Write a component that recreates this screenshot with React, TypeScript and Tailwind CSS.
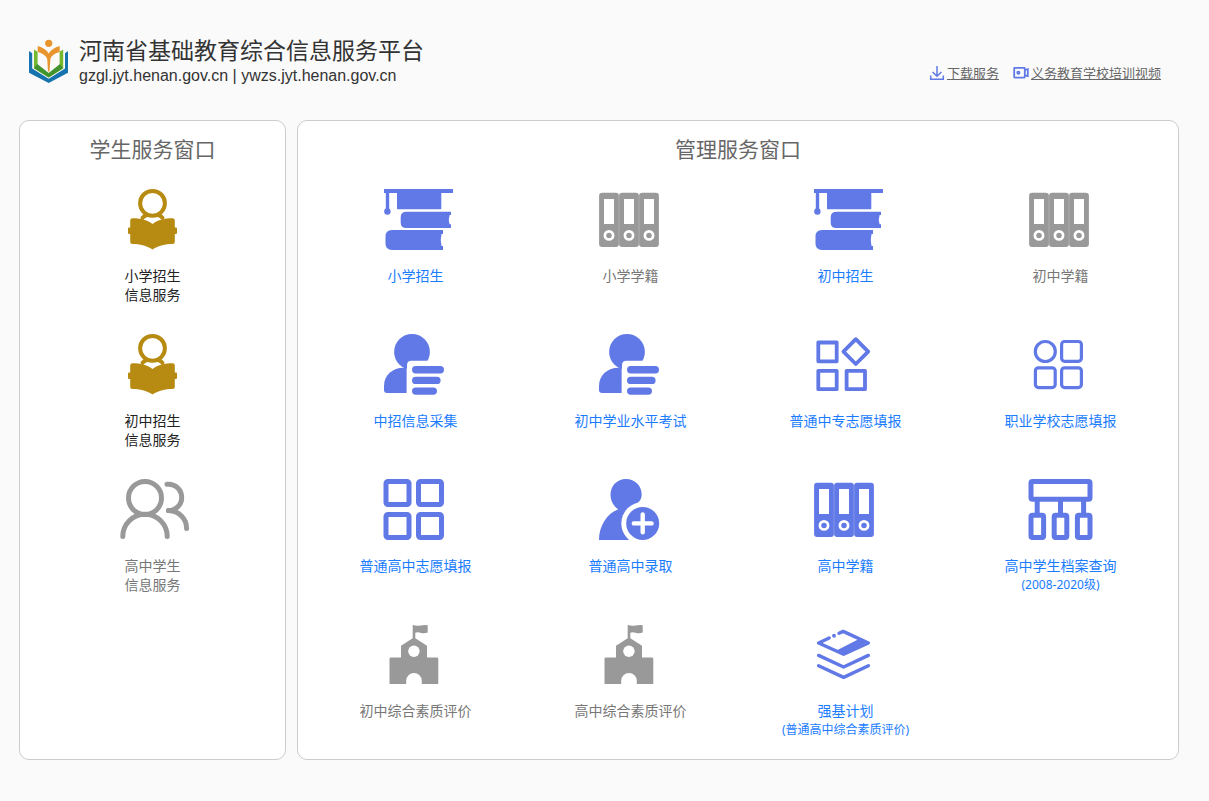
import type { ReactNode } from 'react';
import clsx from 'clsx';

type Tone = 'blue' | 'gray' | 'gold';

interface ServiceItem {
  label: string;
  secondLine?: string;
  note?: string;
  icon: () => ReactNode;
  tone: Tone;
}

const iconTone: Record<Tone, string> = {
  blue: 'text-[#6179e6]',
  gray: 'text-[#999999]',
  gold: 'text-[#b78b12]',
};

const labelTone: Record<Tone, string> = {
  blue: 'text-[#1a7cff]',
  gray: 'text-[#777777]',
  gold: 'text-[#222222]',
};

function Icon({ children }: { children: ReactNode }) {
  return (
    <svg viewBox="0 0 81 64" className="h-16 w-[81px]" fill="currentColor" aria-hidden="true">
      {children}
    </svg>
  );
}

function ReaderIcon() {
  return (
    <Icon>
      <circle cx="40.5" cy="15.3" r="12.4" fill="none" stroke="currentColor" strokeWidth="4" />
      <path d="M30.5 29.8 Q32 27.5 35.5 27 M50.5 29.8 Q49 27.5 45.5 27" fill="none" stroke="currentColor" strokeWidth="4" strokeLinecap="round" />
      <path d="M20.5 30.2 C28 30.2 35 31.8 40.5 36 C46 31.8 53 30.2 60.5 30.2 Q62.8 30.2 62.8 32.5 V39.6 H64 Q65 39.6 65 40.6 V45 Q65 46 64 46 H62.8 V54 Q62.8 56 60.5 56 C53 56 47 57.5 40.5 61.5 C34 57.5 28 56 20.5 56 Q18.2 56 18.2 54 V46 H17 Q16 46 16 45 V40.6 Q16 39.6 17 39.6 H18.2 V32.5 Q18.2 30.2 20.5 30.2 Z" />
    </Icon>
  );
}

function StudentsIcon() {
  return (
    <Icon>
      <g fill="none" stroke="currentColor" strokeWidth="5" strokeLinecap="round">
        <circle cx="33" cy="20" r="16.5" />
        <path d="M10.8 58.5 A22.2 22.2 0 0 1 55.2 58.5" />
        <path d="M55 6.2 H56.5 A13.2 13.2 0 0 1 56.5 32.6" />
        <path d="M56.5 32.6 C67 33 74.6 40.5 74.6 50.5" />
      </g>
    </Icon>
  );
}

function BooksIcon() {
  return (
    <Icon>
      <path d="M9 1 H78 V5 H66.3 V20.5 Q66.3 21.3 65.5 21.3 H22.8 Q22 21.3 22 20.5 V5 H14.2 V21 H10.8 V5 H9 Z" />
      <circle cx="12.4" cy="23.5" r="3.2" />
      <path d="M31.5 23.7 H76 V27 H74.6 Q73 31.5 74.6 36.3 H76 V40 H31.5 Q25.7 40 25.7 34.5 V29.2 Q25.7 23.7 31.5 23.7 Z" />
      <path d="M17 42 H68 V46 H66.5 Q65 52 66.5 58 H68 V62 H17 Q10.5 62 10.5 55.5 V48.5 Q10.5 42 17 42 Z" />
    </Icon>
  );
}

function BindersIcon() {
  return (
    <Icon>
      {[9, 29, 49].map((x) => (
        <g key={x}>
          <rect x={x + 0.1} y="4.7" width="19.8" height="54.3" rx="3" />
          <rect x={x + 5} y="11" width="10" height="25" fill="white" />
          <circle cx={x + 10} cy="47.4" r="4.1" fill="none" stroke="white" strokeWidth="2.7" />
        </g>
      ))}
    </Icon>
  );
}

function UserListIcon() {
  return (
    <Icon>
      <circle cx="37" cy="18.9" r="17.9" />
      <path d="M28.7 34.7 Q30.2 34.7 31.6 36 V60 H12 Q9 60 9 57 V53 C9 42 17.5 34.7 28.7 34.7 Z" />
      <path d="M32 62 V32 Q32 27.7 36.5 27.7 H72 V62 Z" fill="white" />
      <rect x="37" y="33" width="32" height="7.4" rx="3.7" />
      <rect x="37" y="43.7" width="28.6" height="7.4" rx="3.7" />
      <rect x="37" y="54.4" width="25" height="7.4" rx="3.7" />
    </Icon>
  );
}

function DiamondGridIcon() {
  return (
    <Icon>
      <g fill="none" stroke="currentColor" strokeWidth="3.8" strokeLinejoin="round">
        <rect x="13.3" y="9.5" width="18.4" height="18.8" />
        <rect x="13.3" y="37.8" width="18.4" height="18.4" />
        <rect x="41.6" y="37.8" width="18.4" height="18.4" />
        <path d="M50.8 6.2 L63.2 18.6 L50.8 31 L38.4 18.6 Z" />
      </g>
    </Icon>
  );
}

function RoundGridIcon() {
  return (
    <Icon>
      <g fill="none" stroke="currentColor" strokeWidth="3.2">
        <circle cx="25.3" cy="18.5" r="10" />
        <rect x="41.6" y="8.5" width="19.8" height="19.8" rx="3" />
        <rect x="15.4" y="34.8" width="19.8" height="19.8" rx="3" />
        <rect x="41.6" y="34.8" width="19.8" height="19.8" rx="3" />
      </g>
    </Icon>
  );
}

function SquareGridIcon() {
  return (
    <Icon>
      <g fill="none" stroke="currentColor" strokeWidth="5">
        <rect x="11" y="3.5" width="23" height="23" rx="2" />
        <rect x="43.5" y="3.5" width="23" height="23" rx="2" />
        <rect x="11" y="36.5" width="23" height="23" rx="2" />
        <rect x="43.5" y="36.5" width="23" height="23" rx="2" />
      </g>
    </Icon>
  );
}

function UserAddIcon() {
  return (
    <Icon>
      <path d="M36 1 C45 1 51.7 8 51.7 16.5 C51.7 24 46 26 40 30 L42 62 H9 C9 48 17 35.5 28.3 31.3 C23 28 20.5 22 20.5 16.5 C20.5 8 27 1 36 1 Z" />
      <circle cx="52.7" cy="45.4" r="21.4" fill="white" />
      <circle cx="52.7" cy="45.4" r="16.5" />
      <path d="M43.8 45.4 H61.6 M52.7 36.5 V54.3" stroke="white" strokeWidth="4.4" strokeLinecap="round" />
    </Icon>
  );
}

function ArchiveTreeIcon() {
  return (
    <Icon>
      <g fill="none" stroke="currentColor" strokeWidth="5">
        <rect x="11" y="3.5" width="59" height="17.7" rx="1.5" />
        <path d="M17.2 22 V36 M40.5 22 V36 M63.6 22 V36" />
        <rect x="11" y="37.2" width="12.6" height="22.2" rx="1.5" />
        <rect x="34.2" y="37.2" width="12.6" height="22.2" rx="1.5" />
        <rect x="57.4" y="37.2" width="12.6" height="22.2" rx="1.5" />
      </g>
    </Icon>
  );
}

function SchoolIcon() {
  return (
    <Icon>
      <path d="M37.7 2 Q42 3.2 45.5 2.5 Q49.5 1.6 52.7 2.2 V9.6 Q49 10.8 45.5 9.7 Q42.5 8.9 40.3 9.7 V15.2 L52 22.7 V34.4 H62 Q63.3 34.4 63.3 35.7 V61 H46.8 V57.8 A7.8 7.8 0 0 0 31.2 57.8 V61 H14.5 V35.7 Q14.5 34.4 15.8 34.4 H26 V22.7 L37.7 15.2 Z" />
      <circle cx="38.9" cy="28.3" r="5.7" fill="white" />
    </Icon>
  );
}

function LayersIcon() {
  return (
    <Icon>
      <g fill="none" stroke="currentColor" strokeWidth="3.4" strokeLinecap="round" strokeLinejoin="round">
        <path d="M24.2 15 L13.6 20 L38.6 31.2 L63.4 20 L38.2 8.4 L34 10.3" />
        <path d="M29 12.7 V12.8" strokeWidth="3.8" />
        <path d="M13.6 32.4 L38.6 44 L63.4 32.4" />
        <path d="M13.6 42.8 L38.6 54.4 L63.4 42.8" />
      </g>
      <path d="M53 16.6 L63.4 20 L38.6 31.5 L32 27.3 Z" />
    </Icon>
  );
}

function Logo() {
  return (
    <svg viewBox="0 0 42 46" className="h-[46px] w-[42px] shrink-0" role="img" aria-label="logo">
      <path d="M1 13 L4.2 15.2 V30.5 L20.7 40.8 L37 30.5 V15.2 L40 13 V34.7 L20.7 45 L1 34.7 Z" fill="#1673ae" />
      <path d="M6 11.6 L9.6 13.8 V27 L20.7 35.6 L31.6 27 V13.8 L35.2 11.6 V30.3 L20.7 39.6 L6 30.3 Z" fill="#76b82e" />
      <path d="M9.2 26 L20.7 35 L32 26 L35.2 30.3 L20.7 39.6 L6 30.3 Z" fill="#43942f" />
      <path d="M9.7 8 Q17.5 10 20.7 15.5 Q24 10 31.7 8 V14 Q24.8 15.5 22.4 20.7 L21.5 33.5 H20 L19.2 20.7 Q16.5 15.5 9.7 14 Z" fill="#e9952d" />
      <circle cx="20.7" cy="5.3" r="3.6" fill="#e9952d" />
    </svg>
  );
}

function DownloadIcon() {
  return (
    <svg viewBox="0 0 16 16" className="size-4" fill="none" stroke="#6179e6" strokeWidth="1.5" aria-hidden="true">
      <path d="M8 1 V11 M3.6 7 L8 11.3 L12.4 7 M1.7 10.6 V14.2 H14.3 V10.6" />
    </svg>
  );
}

function VideoIcon() {
  return (
    <svg viewBox="0 0 16 16" className="size-4" fill="none" stroke="#6179e6" strokeWidth="1.8" aria-hidden="true">
      <rect x="1.2" y="2.8" width="10.6" height="9.8" rx="0.5" />
      <path d="M11.8 5 L14.8 4.2 V11.2 L11.8 10.4" />
      <circle cx="5.4" cy="7.7" r="1.1" />
    </svg>
  );
}

const studentServices: ServiceItem[] = [
  { label: '小学招生', secondLine: '信息服务', icon: ReaderIcon, tone: 'gold' },
  { label: '初中招生', secondLine: '信息服务', icon: ReaderIcon, tone: 'gold' },
  { label: '高中学生', secondLine: '信息服务', icon: StudentsIcon, tone: 'gray' },
];

const manageServices: ServiceItem[] = [
  { label: '小学招生', icon: BooksIcon, tone: 'blue' },
  { label: '小学学籍', icon: BindersIcon, tone: 'gray' },
  { label: '初中招生', icon: BooksIcon, tone: 'blue' },
  { label: '初中学籍', icon: BindersIcon, tone: 'gray' },
  { label: '中招信息采集', icon: UserListIcon, tone: 'blue' },
  { label: '初中学业水平考试', icon: UserListIcon, tone: 'blue' },
  { label: '普通中专志愿填报', icon: DiamondGridIcon, tone: 'blue' },
  { label: '职业学校志愿填报', icon: RoundGridIcon, tone: 'blue' },
  { label: '普通高中志愿填报', icon: SquareGridIcon, tone: 'blue' },
  { label: '普通高中录取', icon: UserAddIcon, tone: 'blue' },
  { label: '高中学籍', icon: BindersIcon, tone: 'blue' },
  { label: '高中学生档案查询', note: '(2008-2020级)', icon: ArchiveTreeIcon, tone: 'blue' },
  { label: '初中综合素质评价', icon: SchoolIcon, tone: 'gray' },
  { label: '高中综合素质评价', icon: SchoolIcon, tone: 'gray' },
  { label: '强基计划', note: '(普通高中综合素质评价)', icon: LayersIcon, tone: 'blue' },
];

function ServiceLink({ item }: { item: ServiceItem }) {
  const ItemIcon = item.icon;
  return (
    <a href="#" className="flex min-h-[145px] flex-col items-center pt-[9px] text-center">
      <span className={iconTone[item.tone]}>
        <ItemIcon />
      </span>
      <span className={clsx('mt-[14px] text-sm leading-[19px]', labelTone[item.tone])}>
        {item.label}
        {item.secondLine ? <span className="block">{item.secondLine}</span> : null}
        {item.note ? <span className="block text-xs leading-[19px]">{item.note}</span> : null}
      </span>
    </a>
  );
}

function Panel({ title, className, children }: { title: string; className: string; children: ReactNode }) {
  return (
    <section className={clsx('rounded-[10px] border border-[#cccccc] bg-white px-[10px]', className)}>
      <h2 className="mt-3 mb-[14px] text-center text-[21px] leading-8 text-[#666666]">{title}</h2>
      {children}
    </section>
  );
}

export default function App() {
  return (
    <div className="min-h-screen bg-[#fafafa] pb-10 font-['Noto_Sans','Noto_Sans_CJK_SC',sans-serif]">
      <header className="flex items-start justify-between pt-[38px] pr-12 pb-[30px] pl-7">
        <div className="flex gap-[9px]">
          <Logo />
          <div className="text-[#333333]">
            <h1 className="text-[23px] leading-6">河南省基础教育综合信息服务平台</h1>
            <p className="font-['Liberation_Sans',sans-serif] text-base leading-7">
              gzgl.jyt.henan.gov.cn | ywzs.jyt.henan.gov.cn
            </p>
          </div>
        </div>
        <nav className="mt-[25px] flex gap-[14px] text-[13px] leading-5 text-[#666666]">
          <a href="#" className="flex items-center gap-0.5">
            <DownloadIcon />
            <span className="underline">下载服务</span>
          </a>
          <a href="#" className="flex items-center gap-0.5">
            <VideoIcon />
            <span className="underline">义务教育学校培训视频</span>
          </a>
        </nav>
      </header>

      <main className="flex gap-[11px] pr-[30px] pl-[19px]">
        <Panel title="学生服务窗口" className="w-[267px] shrink-0">
          {studentServices.map((item) => (
            <ServiceLink key={item.label} item={item} />
          ))}
        </Panel>
        <Panel title="管理服务窗口" className="flex-1">
          <div className="grid grid-cols-4">
            {manageServices.map((item) => (
              <ServiceLink key={item.label} item={item} />
            ))}
          </div>
        </Panel>
      </main>
    </div>
  );
}
